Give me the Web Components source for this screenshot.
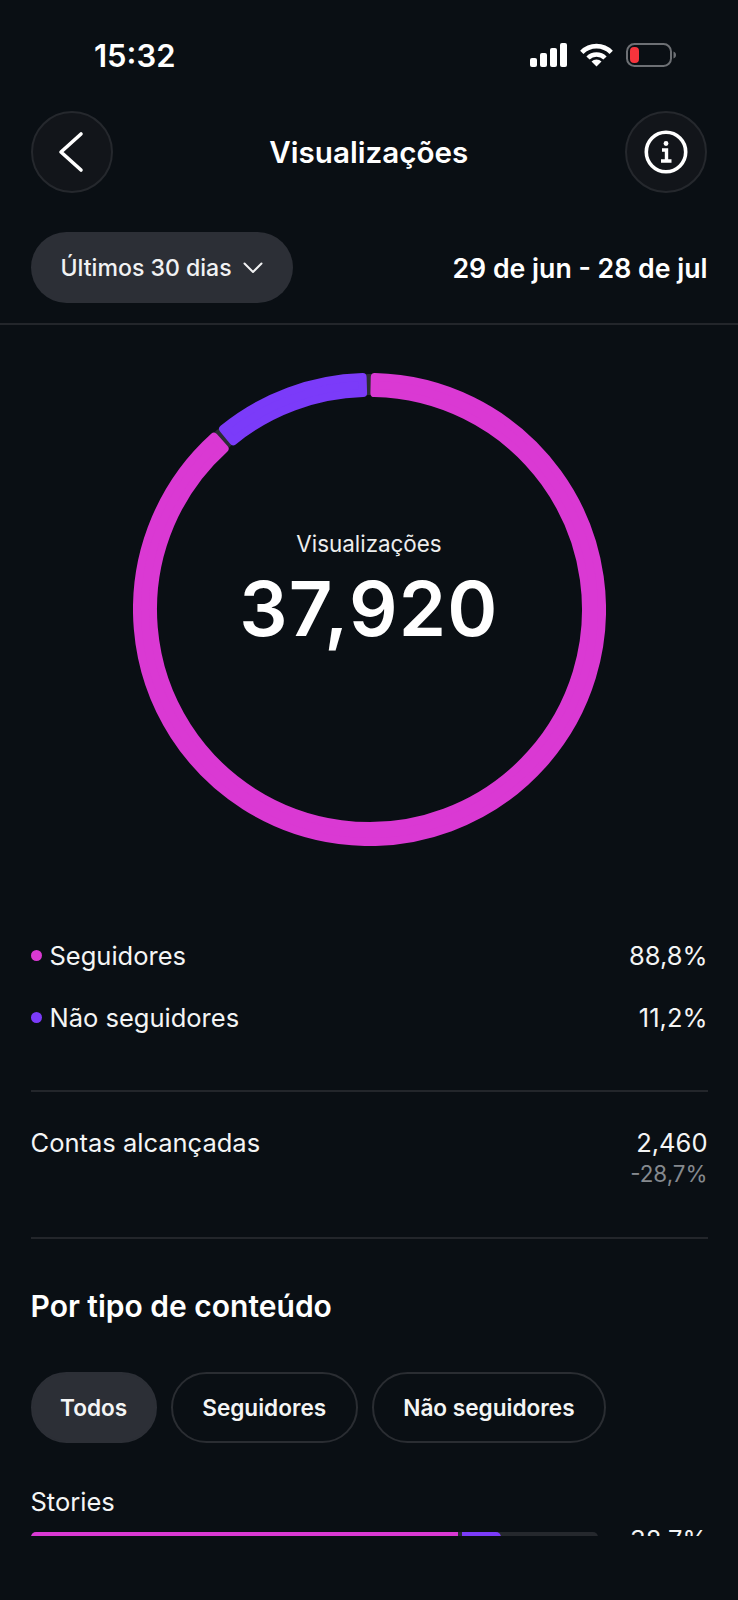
<!DOCTYPE html>
<html lang="pt">
<head>
<meta charset="utf-8">
<title>Visualizações</title>
<style>
  html, body { margin: 0; background: #0a0f14; }
  body { font-family: Inter, "Liberation Sans", sans-serif; color: #fff; }
</style>
</head>
<body>
<app-screen>
  <status-bar time="15:32"></status-bar>
  <nav-header title="Visualizações"></nav-header>
  <period-row label="Últimos 30 dias" range="29 de jun - 28 de jul"></period-row>
  <insights-body>
    <donut-chart label="Visualizações" value="37,920" share="11.2"></donut-chart>
    <legend-list>
      <legend-row color="#da39d3" label="Seguidores" value="88,8%"></legend-row>
      <legend-row color="#7b3bf9" label="Não seguidores" value="11,2%"></legend-row>
    </legend-list>
    <metric-row label="Contas alcançadas" value="2,460" change="-28,7%"></metric-row>
    <content-section heading="Por tipo de conteúdo">
      <filter-chip active>Todos</filter-chip>
      <filter-chip>Seguidores</filter-chip>
      <filter-chip>Não seguidores</filter-chip>
      <bar-row slot="rows" label="Stories" value="38,7%" main="427" other="39"></bar-row>
    </content-section>
  </insights-body>
</app-screen>

<script>
function define(name, css, html, setup) {
  customElements.define(name, class extends HTMLElement {
    constructor() {
      super();
      this.attachShadow({ mode: "open" });
    }
    connectedCallback() {
      const attr = (k) => this.getAttribute(k) || "";
      this.shadowRoot.innerHTML = `<style>${css}</style>${html(attr)}`;
      if (setup) setup(this.shadowRoot, attr);
    }
  });
}

define("app-screen", `
  :host { display: block; width: 738px; height: 1600px; background: #0a0f14; overflow: hidden; }
`, () => `<slot></slot>`);

define("status-bar", `
  :host { display: flex; align-items: center; justify-content: space-between; height: 110px; padding: 0 62px 0 94px; }
  .time { font-size: 31px; font-weight: 600; }
  .icons { display: flex; align-items: center; gap: 13px; }
  svg { display: block; }
`, (a) => `
  <span class="time">${a("time")}</span>
  <div class="icons">
    <svg width="37" height="24" viewBox="0 0 37 24" fill="#fff">
      <rect x="0" y="15" width="7" height="9" rx="2"/>
      <rect x="10" y="10" width="7" height="14" rx="2"/>
      <rect x="20" y="5" width="7" height="19" rx="2"/>
      <rect x="30" y="0" width="7" height="24" rx="2"/>
    </svg>
    <svg width="33" height="24" viewBox="0 0 33 24" fill="none" stroke="#fff">
      <path d="M1.800 9.300A20.500 20.500 0 0 1 31.200 9.300" stroke-width="4.600"/>
      <path d="M8 15A12 12 0 0 1 25 15" stroke-width="4.600"/>
      <path d="M16.500 23.500L11.500 18.600A7 7 0 0 1 21.500 18.600Z" fill="#fff" stroke="none"/>
    </svg>
    <svg width="50" height="24" viewBox="0 0 50 24">
      <rect x="1" y="1" width="44" height="22" rx="7.5" fill="none" stroke="#6d7074" stroke-width="2"/>
      <rect x="4" y="4" width="9" height="16" rx="4" fill="#f7343c"/>
      <path d="M47.500 8.500C49.500 9.500 50 10.500 50 12C50 13.500 49.500 14.500 47.500 15.500Z" fill="#6d7074"/>
    </svg>
  </div>
`);

define("round-button", `
  :host { display: flex; align-items: center; justify-content: center; box-sizing: border-box; width: 82px; height: 82px;
    border: 2px solid #25282d; border-radius: 50%; background: #12151a; }
`, () => `<slot></slot>`);

define("nav-header", `
  :host { display: flex; align-items: center; justify-content: space-between; height: 83px; padding: 0 31px 0 30.5px; }
  h1 { margin: 0; font-size: 29.6px; font-weight: 600; }
  svg { display: block; }
`, (a) => `
  <round-button>
    <svg width="78" height="78" viewBox="0 0 78 78" fill="none" stroke="#fff" stroke-width="3.6" stroke-linecap="round" stroke-linejoin="round">
      <path d="M48 21L28 39L48 57"/>
    </svg>
  </round-button>
  <h1>${a("title")}</h1>
  <round-button>
    <svg width="46" height="46" viewBox="0 0 46 46" fill="none" stroke="#fff" stroke-width="3.6">
      <circle cx="23" cy="23" r="19.700"/>
      <circle cx="23" cy="14.500" r="2.400" fill="#fff" stroke="none"/>
      <path d="M19 21H23.500V32M18 32H28.500" stroke-width="3.400"/>
    </svg>
  </round-button>
`);

define("period-row", `
  :host { display: flex; align-items: center; justify-content: space-between; box-sizing: border-box; height: 132px;
    padding: 38px 30.5px 19px; border-bottom: 2px solid #23262b; }
  .pill { display: flex; align-items: center; gap: 11px; height: 71px; box-sizing: border-box; padding: 0 30px;
    background: #2c2f36; border-radius: 36px; font-size: 23.1px; font-weight: 500; color: #f1f2f3; }
  .range { font-size: 26.7px; font-weight: 600; }
  svg { display: block; }
`, (a) => `
  <div class="pill">${a("label")}
    <svg width="20" height="12" viewBox="0 0 20 12" fill="none" stroke="#f1f2f3" stroke-width="2" stroke-linecap="round" stroke-linejoin="round"><path d="M1.500 1.500L10 10L18.500 1.500"/></svg>
  </div>
  <span class="range">${a("range")}</span>
`);

define("insights-body", `
  :host { display: block; height: 1211px; overflow: hidden; }
`, () => `<slot></slot>`);

function sector(cx, cy, rOut, rIn, from, to) {
  const pt = (r, deg) => {
    const t = (deg - 90) * Math.PI / 180;
    return (cx + r * Math.cos(t)).toFixed(2) + " " + (cy + r * Math.sin(t)).toFixed(2);
  };
  const large = to - from > 180 ? 1 : 0;
  return `M${pt(rOut, from)}A${rOut} ${rOut} 0 ${large} 1 ${pt(rOut, to)}L${pt(rIn, to)}A${rIn} ${rIn} 0 ${large} 0 ${pt(rIn, from)}Z`;
}

define("donut-chart", `
  :host { display: grid; justify-content: center; padding-top: 48px; }
  svg, .center { grid-area: 1 / 1; }
  svg { display: block; }
  .center { display: flex; flex-direction: column; align-items: center; justify-content: center; }
  .label { font-size: 22.4px; font-weight: 400; color: #eceded; line-height: 28px; margin-top: -35px; }
  .value { font-size: 76px; font-weight: 560; line-height: 92px; margin-top: 4px; letter-spacing: 1.2px; }
`, (a) => {
  const split = 360 - parseFloat(a("share")) * 3.6;
  const c = 236.5, rOut = 236.5 - 4, rIn = 212.5 + 4;
  return `
    <svg width="473" height="473" viewBox="0 0 473 473">
      <circle cx="${c}" cy="${c}" r="225" fill="none" stroke="#2a2d33" stroke-width="21"/>
      <path d="${sector(c, c, rOut, rIn, 1.3, split - 1.7)}" fill="#da39d3" stroke="#da39d3" stroke-width="8" stroke-linejoin="round"/>
      <path d="${sector(c, c, rOut, rIn, split + 1.3, 358.3)}" fill="#7b3bf9" stroke="#7b3bf9" stroke-width="8" stroke-linejoin="round"/>
    </svg>
    <div class="center">
      <span class="label">${a("label")}</span>
      <span class="value">${a("value")}</span>
    </div>`;
});

define("legend-list", `
  :host { display: block; margin: 79px 30.5px 0; padding-bottom: 41px; border-bottom: 2px solid #23262b; }
`, () => `<slot></slot>`);

define("legend-row", `
  :host { display: flex; align-items: center; box-sizing: border-box; height: 62px; padding-bottom: 2px; font-size: 25.5px; font-weight: 400; color: #f4f5f5; }
  .dot { width: 11px; height: 11px; border-radius: 50%; margin-right: 8px; }
  .value { margin-left: auto; }
`, (a) => `
  <span class="dot" style="background:${a("color")}"></span>
  <span>${a("label")}</span>
  <span class="value">${a("value")}</span>
`);

define("metric-row", `
  :host { display: flex; justify-content: space-between; margin: 0 30.5px; padding: 35px 0 49px; border-bottom: 2px solid #23262b;
    font-size: 25.5px; color: #f4f5f5; }
  .num { display: flex; flex-direction: column; align-items: flex-end; }
  .top { line-height: 32px; }
  .change { font-size: 22.4px; line-height: 28px; color: #85898e; margin-top: 1px; }
`, (a) => `
  <span class="top">${a("label")}</span>
  <div class="num">
    <span class="top">${a("value")}</span>
    <span class="change">${a("change")}</span>
  </div>
`);

define("content-section", `
  :host { display: block; padding: 0 30.5px; }
  h2 { margin: 0; padding-top: 49px; font-size: 30px; line-height: 36px; font-weight: 600; }
  .chips { display: flex; gap: 14px; margin-top: 48px; }
  .rows { margin-top: 43px; }
`, (a) => `
  <h2>${a("heading")}</h2>
  <div class="chips"><slot></slot></div>
  <div class="rows"><slot name="rows"></slot></div>
`);

define("filter-chip", `
  :host { display: flex; align-items: center; box-sizing: border-box; height: 71px; padding: 0 29.5px; border-radius: 36px;
    border: 2px solid #2a2d32; font-size: 22.6px; font-weight: 600; color: #f4f5f5; }
  :host([active]) { padding: 0 27.5px; background: #2c2f36; border-color: #2c2f36; }
`, () => `<slot></slot>`);

define("bar-row", `
  :host { display: block; color: #f4f5f5; font-size: 25.5px; }
  .label { line-height: 32px; }
  .line { display: flex; align-items: flex-start; margin-top: 14px; }
  .track { display: flex; gap: 4px; width: 567px; height: 10px; border-radius: 5px; background: #25282d; overflow: hidden; flex: none; }
  .main { background: #da39d3; }
  .other { background: #7b3bf9; border-radius: 0 5px 5px 0; }
  .value { margin-left: auto; margin-top: -8px; line-height: 32px; }
`, (a) => `
  <div class="label">${a("label")}</div>
  <div class="line">
    <div class="track">
      <div class="main" style="width:${a("main")}px"></div>
      <div class="other" style="width:${a("other")}px"></div>
    </div>
    <span class="value">${a("value")}</span>
  </div>
`);
</script>
</body>
</html>
